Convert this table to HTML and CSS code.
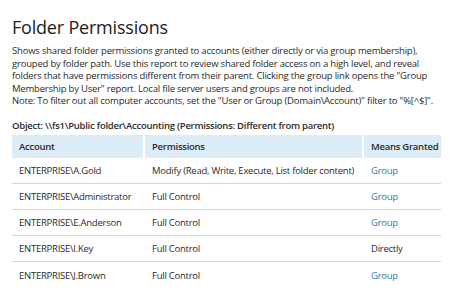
FILE: index.html
```html
<!DOCTYPE html>
<html lang="en">
<head>
  <meta charset="UTF-8" />
  <title>Folder Permissions</title>
  <link rel="stylesheet" href="styles.css">
</head>
<body>

  <h1>Folder Permissions</h1>

  <p class="intro">
    Shows shared folder permissions granted to accounts (either directly or via group membership),
    grouped by folder path. Use this report to review shared folder access on a high level, and reveal
    folders that have permissions different from their parent. Clicking the group link opens the "Group
    Membership by User" report. Local file server users and groups are not included.<br>
    Note: To filter out all computer accounts, set the "User or Group (Domain\Account)" filter to "%[^$]".
  </p>

  <div class="object">Object: \\fs1\Public folder\Accounting (Permissions: Different from parent)</div>

  <table class="report">
    <thead>
      <tr>
        <th class="col-account">Account</th>
        <th class="col-perm">Permissions</th>
        <th class="col-means">Means Granted</th>
      </tr>
    </thead>
    <tbody>
      <tr>
        <td>ENTERPRISE\A.Gold</td>
        <td>Modify (Read, Write, Execute, List folder content)</td>
        <td><a href="#">Group</a></td>
      </tr>
      <tr>
        <td>ENTERPRISE\Administrator</td>
        <td>Full Control</td>
        <td><a href="#">Group</a></td>
      </tr>
      <tr>
        <td>ENTERPRISE\E.Anderson</td>
        <td>Full Control</td>
        <td><a href="#">Group</a></td>
      </tr>
      <tr>
        <td>ENTERPRISE\I.Key</td>
        <td>Full Control</td>
        <td>Directly</td>
      </tr>
      <tr>
        <td>ENTERPRISE\J.Brown</td>
        <td>Full Control</td>
        <td><a href="#">Group</a></td>
      </tr>
    </tbody>
  </table>

</body>
</html>
```

FILE: styles.css
```css
* { box-sizing: border-box; }

body {
  font-family: 'Open Sans', sans-serif;
  background-color: #ffffff;
  color: #2b2b2b;
  margin: 0;
  padding: 0 12px;
}

h1 {
  font-size: 18px;
  font-weight: 400;
  letter-spacing: -0.2px;
  line-height: 24px;
  color: #222;
  margin: 15px 0 0;
}

.intro {
  font-size: 9.5px;
  letter-spacing: -0.2px;
  line-height: 12.5px;
  margin: 6px 0 0;
}

.object {
  font-size: 9.5px;
  letter-spacing: -0.25px;
  font-weight: 600;
  line-height: 12.5px;
  margin-top: 12px;
}

.report {
  margin-top: 3px;
  border-collapse: separate;
  border-spacing: 0;
  width: 429px;
  font-size: 9.5px;
  letter-spacing: -0.25px;
  table-layout: fixed;
}

.report th {
  background-color: #dcedf8;
  font-weight: 600;
  text-align: left;
  white-space: nowrap;
  height: 23px;
  padding: 0 6px 0 7px;
  border-right: 2px solid #fff;
}

.report th:last-child { border-right: none; }

.col-account { width: 133px; }
.col-perm { width: 219px; }

.report td {
  height: 26px;
  padding: 0 6px 0 7px;
  white-space: nowrap;
  border-bottom: 1px solid #d6d6d6;
}

.report tbody tr:last-child td { border-bottom: none; }

.report a {
  color: #2d7bb3;
  text-decoration: none;
}
```
